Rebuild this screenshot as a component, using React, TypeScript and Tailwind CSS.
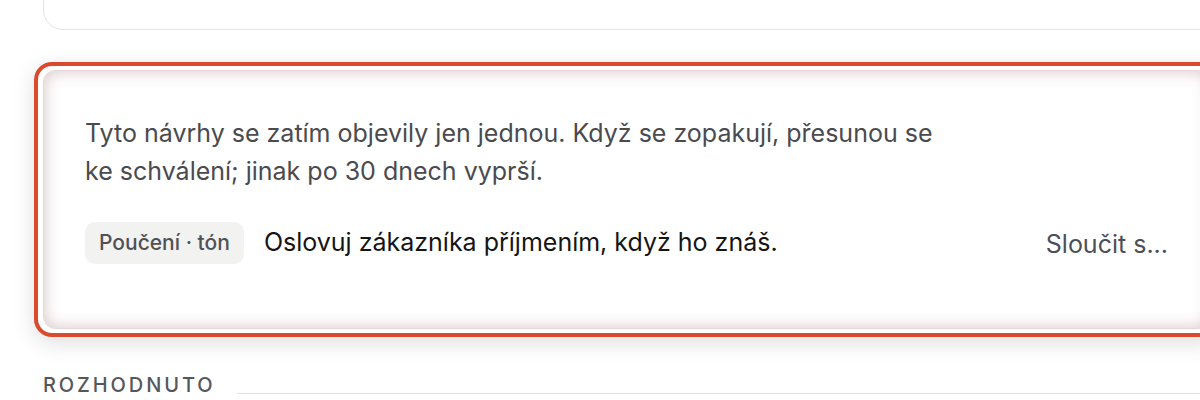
import React from "react";

export default function App() {
  return (
    <div
      className="h-[400px] w-[1200px] overflow-hidden bg-white pl-[43px]"
      style={{ fontFamily: "Inter, 'Noto Sans', sans-serif" }}
    >
      <div className="w-[1180px]">
        {/* Previous card, cut off at the top */}
        <div className="-mt-[40px] h-[70px] rounded-[20px] border border-[#e4e4e4] bg-white" />

        {/* Pending suggestions, highlighted */}
        <div className="-ml-[9px] mt-[32px] rounded-[18px] border-4 border-[#dc4a2d] bg-white py-1 pl-[5px] shadow-[0_6px_22px_rgba(0,0,0,0.13)]">
          <div className="h-[259px] w-[1167px] rounded-xl border border-[#e6d8d8] bg-white px-[41px] pt-[43px] shadow-[inset_0_0_16px_rgba(130,70,70,0.32)]">
            <p className="max-w-[880px] text-[25px] leading-[38px] text-[#4a4a4f]">
              Tyto návrhy se zatím objevily jen jednou. Když se zopakují, přesunou se ke schválení; jinak po 30 dnech vyprší.
            </p>

            <div className="mt-[32px] flex items-center">
              <span className="rounded-[10px] bg-[#f2f2f0] px-[14px] py-[8px] text-[21px] font-medium leading-[26px] text-[#505157]">
                Poučení · tón
              </span>
              <span className="ml-[20px] flex-1 text-[25px] text-[#151515]">
                Oslovuj zákazníka příjmením, když ho znáš.
              </span>
              <button className="mt-1 text-[25px] text-[#4b5058]">Sloučit s...</button>
            </div>
          </div>
        </div>

        {/* Decided section header */}
        <div className="mt-[36px] flex items-center gap-[22px]">
          <span className="text-[20px] font-medium uppercase leading-6 tracking-[0.145em] text-[#55575c]">
            Rozhodnuto
          </span>
          <div className="mt-[16px] h-px flex-1 bg-[#e2e2e2]" />
        </div>
      </div>
    </div>
  );
}
